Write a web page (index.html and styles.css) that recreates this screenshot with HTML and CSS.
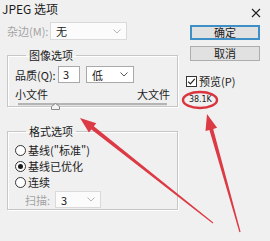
FILE: index.html
```html
<!DOCTYPE html>
<html lang="zh">
<head>
  <meta charset="UTF-8" />
  <title>JPEG 选项</title>
  <link rel="stylesheet" href="styles.css">
</head>
<body>
  <div class="dialog">
    <div class="title-bar">
      <span class="title">JPEG 选项</span>
      <svg class="close" width="10" height="10" viewBox="0 0 10 10"><path d="M1 1L9 9M9 1L1 9" stroke="#222" stroke-width="1.1"/></svg>
    </div>

    <div class="main">
      <div class="left-col">
        <div class="matte-row">
          <label class="muted matte-label">杂边(M):</label>
          <div class="select matte-select disabled">
            <span>无</span>
            <svg class="chev" width="8" height="5" viewBox="0 0 8 5"><path d="M0.5 0.5L4 4L7.5 0.5" fill="none" stroke="#b5b5b5"/></svg>
          </div>
        </div>

        <fieldset class="group image-group">
          <legend>图像选项</legend>
          <div class="quality-row">
            <label class="quality-label">品质(Q):</label>
            <div class="num-input">3</div>
            <div class="select quality-select">
              <span>低</span>
              <svg class="chev" width="8" height="5" viewBox="0 0 8 5"><path d="M0.5 0.5L4 4L7.5 0.5" fill="none" stroke="#555"/></svg>
            </div>
          </div>
          <div class="size-labels">
            <span>小文件</span>
            <span>大文件</span>
          </div>
          <div class="slider">
            <div class="track"></div>
            <svg class="thumb" width="9" height="7" viewBox="0 0 9 7"><path d="M0.5 6.5V3.5L4.5 0.5L8.5 3.5V6.5Z" fill="#f4f4f4" stroke="#8a8a8a"/></svg>
          </div>
        </fieldset>

        <fieldset class="group format-group">
          <legend>格式选项</legend>
          <div class="radio-row"><span class="radio"></span>基线("标准")</div>
          <div class="radio-row"><span class="radio checked"></span>基线已优化</div>
          <div class="radio-row"><span class="radio"></span>连续</div>
          <div class="scan-row">
            <label class="muted scan-label">扫描:</label>
            <div class="select scan-select disabled">
              <span>3</span>
              <svg class="chev" width="8" height="5" viewBox="0 0 8 5"><path d="M0.5 0.5L4 4L7.5 0.5" fill="none" stroke="#b5b5b5"/></svg>
            </div>
          </div>
        </fieldset>
      </div>

      <div class="right-col">
        <button class="btn btn-default">确定</button>
        <button class="btn">取消</button>
        <div class="preview-row">
          <svg class="checkbox" width="11" height="11" viewBox="0 0 11 11"><rect x="0.5" y="0.5" width="10" height="10" fill="#fff" stroke="#333"/><path d="M2.2 5.6L4.4 7.8L8.8 2.8" fill="none" stroke="#222" stroke-width="1.2"/></svg>
          <span>预览(P)</span>
        </div>
        <div class="file-size">38.1K</div>
      </div>
    </div>

    <svg class="marks" width="270" height="241" viewBox="0 0 270 241">
      <ellipse cx="200" cy="100" rx="17" ry="8" fill="none" stroke="#d8353f" stroke-width="2.4"/>
      <polygon points="80,118 96.3,123.2 93.8,126.3 213.3,222.6 212.7,223.4 91.4,129.5 88.9,132.6" fill="#dc3a44"/>
      <polygon points="207,114 217.1,127.8 213.2,128.9 240.6,231.8 239.4,232.2 209.4,129.9 205.5,131" fill="#dc3a44"/>
    </svg>
  </div>
</body>
</html>
```

FILE: styles.css
```css
body {
  margin: 0;
  padding: 0;
  background-color: #f0f0f0;
  font-family: "Noto Sans CJK SC", "Liberation Sans", sans-serif;
  font-size: 11px;
  color: #1b1b1b;
}

.dialog {
  position: relative;
  width: 270px;
  height: 241px;
  overflow: hidden;
  background-color: #f0f0f0;
}

.title-bar {
  display: flex;
  justify-content: space-between;
  align-items: center;
  height: 20px;
  padding: 0 9px 0 2px;
}

.title {
  font-size: 12px;
  line-height: 14px;
  margin-top: -2px;
}

.close {
  margin-top: 6px;
}

.main {
  display: flex;
}

.left-col {
  width: 171px;
  margin-left: 7px;
}

.right-col {
  display: flex;
  flex-direction: column;
  width: 70px;
  margin-left: 12px;
}

.muted {
  color: #a3a3a3;
}

/* dropdowns */
.select {
  display: flex;
  justify-content: space-between;
  align-items: center;
  box-sizing: border-box;
  height: 18px;
  padding: 0 5px;
  background-color: #fff;
  border: 1px solid #a9a9a9;
}

.select.disabled {
  background-color: #fbfbfb;
  border-color: #dadada;
}

.matte-row {
  display: flex;
  align-items: center;
  margin-top: 2px;
}

.matte-label {
  width: 43px;
}

.matte-select {
  width: 77px;
}

/* group boxes */
.group {
  margin: 0;
  border: 1px solid #c6c6c6;
  box-shadow: inset 1px 1px 0 #fff, 1px 1px 0 #fff;
}

.group legend {
  padding: 0 3px;
  margin-left: 11px;
  font-size: 11px;
  line-height: 14px;
}

.image-group {
  margin-top: 8px;
  height: 59px;
  padding: 0 7px;
  box-sizing: border-box;
}

.quality-row {
  display: flex;
  align-items: center;
  margin-top: 4px;
}

.quality-label {
  width: 43px;
}

.num-input {
  box-sizing: border-box;
  width: 22px;
  height: 17px;
  padding-left: 4px;
  line-height: 15px;
  background-color: #fff;
  border: 1px solid #a9a9a9;
}

.quality-select {
  width: 48px;
  height: 17px;
  margin-left: 6px;
}

.size-labels {
  display: flex;
  justify-content: space-between;
  margin-top: 5px;
  line-height: 12px;
}

.slider {
  position: relative;
  height: 8px;
  margin: 3px 3px 0 3px;
}

.track {
  height: 2px;
  margin-top: 3px;
  background-color: #b4b4b4;
  border-bottom: 1px solid #e4e4e4;
}

.thumb {
  position: absolute;
  left: 33px;
  top: 0;
}

.format-group {
  margin-top: 17px;
  height: 86px;
  padding: 4px 7px 0 7px;
  box-sizing: border-box;
}

.radio-row {
  display: flex;
  align-items: center;
  height: 16px;
  line-height: 16px;
}

.radio {
  box-sizing: border-box;
  width: 11px;
  height: 11px;
  margin-right: 2px;
  border: 1px solid #333;
  border-radius: 50%;
  background-color: #fff;
  position: relative;
}

.radio.checked::after {
  content: "";
  position: absolute;
  left: 2px;
  top: 2px;
  width: 5px;
  height: 5px;
  border-radius: 50%;
  background-color: #1b1b1b;
}

.scan-row {
  display: flex;
  align-items: center;
  margin-top: 1px;
  padding-left: 10px;
}

.scan-label {
  width: 30px;
}

.scan-select {
  width: 46px;
  height: 17px;
}

/* buttons */
.btn {
  box-sizing: border-box;
  height: 15px;
  padding: 0;
  font-family: inherit;
  font-size: 11px;
  line-height: 13px;
  color: #1b1b1b;
  background-color: #e1e1e1;
  border: 1px solid #adadad;
}

.btn-default {
  margin-top: 5px;
  border: 2px solid #3d8fc6;
  line-height: 11px;
}

.btn + .btn {
  margin-top: 6px;
}

.preview-row {
  display: flex;
  align-items: center;
  gap: 2px;
  margin-top: 12px;
  margin-left: -4px;
}

.file-size {
  margin-top: 6px;
  margin-left: -1px;
  font-family: "DejaVu Sans", sans-serif;
  font-size: 8px;
  letter-spacing: -0.1px;
}

.marks {
  position: absolute;
  left: 0;
  top: 0;
  pointer-events: none;
}
```
